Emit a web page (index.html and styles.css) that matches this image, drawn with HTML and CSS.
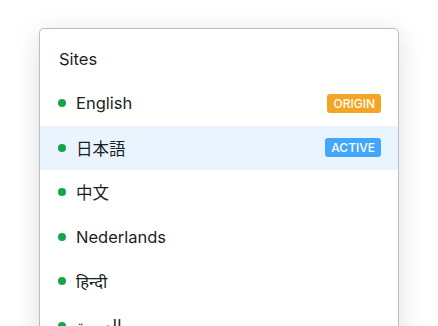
FILE: index.html
```html
<!DOCTYPE html>
<html lang="en">
<head>
<meta charset="utf-8">
<title>Sites</title>
<link rel="stylesheet" href="styles.css">
</head>
<body>
<div class="page">
  <div class="card">
    <div class="card-header">Sites</div>
    <ul class="site-list">
      <li class="site"><span class="dot"></span><span class="name">English</span><span class="badge badge-origin">ORIGIN</span></li>
      <li class="site site-active"><span class="dot"></span><span class="name">日本語</span><span class="badge badge-active">ACTIVE</span></li>
      <li class="site"><span class="dot"></span><span class="name">中文</span></li>
      <li class="site"><span class="dot"></span><span class="name">Nederlands</span></li>
      <li class="site"><span class="dot"></span><span class="name">हिन्दी</span></li>
      <li class="site"><span class="dot"></span><span class="name">العربية</span></li>
    </ul>
  </div>
</div>
</body>
</html>
```
FILE: styles.css
```css
* { box-sizing: border-box; }
html, body { margin: 0; padding: 0; background: #ffffff; }
body {
  font-family: Inter, "Noto Sans", "Noto Sans CJK JP", sans-serif;
  color: #1a1f24;
  overflow: hidden;
  height: 326px;
}
.page {
  display: flex;
  justify-content: center;
  padding-top: 28px;
}
.card {
  width: 360px;
  background: #fff;
  border: 1px solid #bcbccb;
  border-radius: 5px;
  box-shadow: 0 6px 28px rgba(0, 0, 0, 0.13);
  padding-top: 8px;
}
.card-header {
  height: 44px;
  display: flex;
  align-items: center;
  padding: 0 19px;
  font-size: 16.5px;
  font-weight: 400;
}
.site-list { list-style: none; margin: 0; padding: 0; }
.site {
  height: 44.5px;
  display: flex;
  align-items: center;
  padding: 0 17px 0 18px;
  font-size: 16.5px;
}
.site-active { background: #eaf4ff; }
.dot {
  width: 8px;
  height: 8px;
  border-radius: 50%;
  background: #16a34a;
  margin-right: 10px;
  flex: none;
}
.name { flex: 1; }
.badge {
  height: 19px;
  padding: 0 6px;
  border-radius: 3px;
  font-size: 12px;
  font-weight: 500;
  color: #fff;
  display: flex;
  align-items: center;
}
.badge-origin { background: #f5a524; }
.badge-active { background: #42a6fb; }
```
